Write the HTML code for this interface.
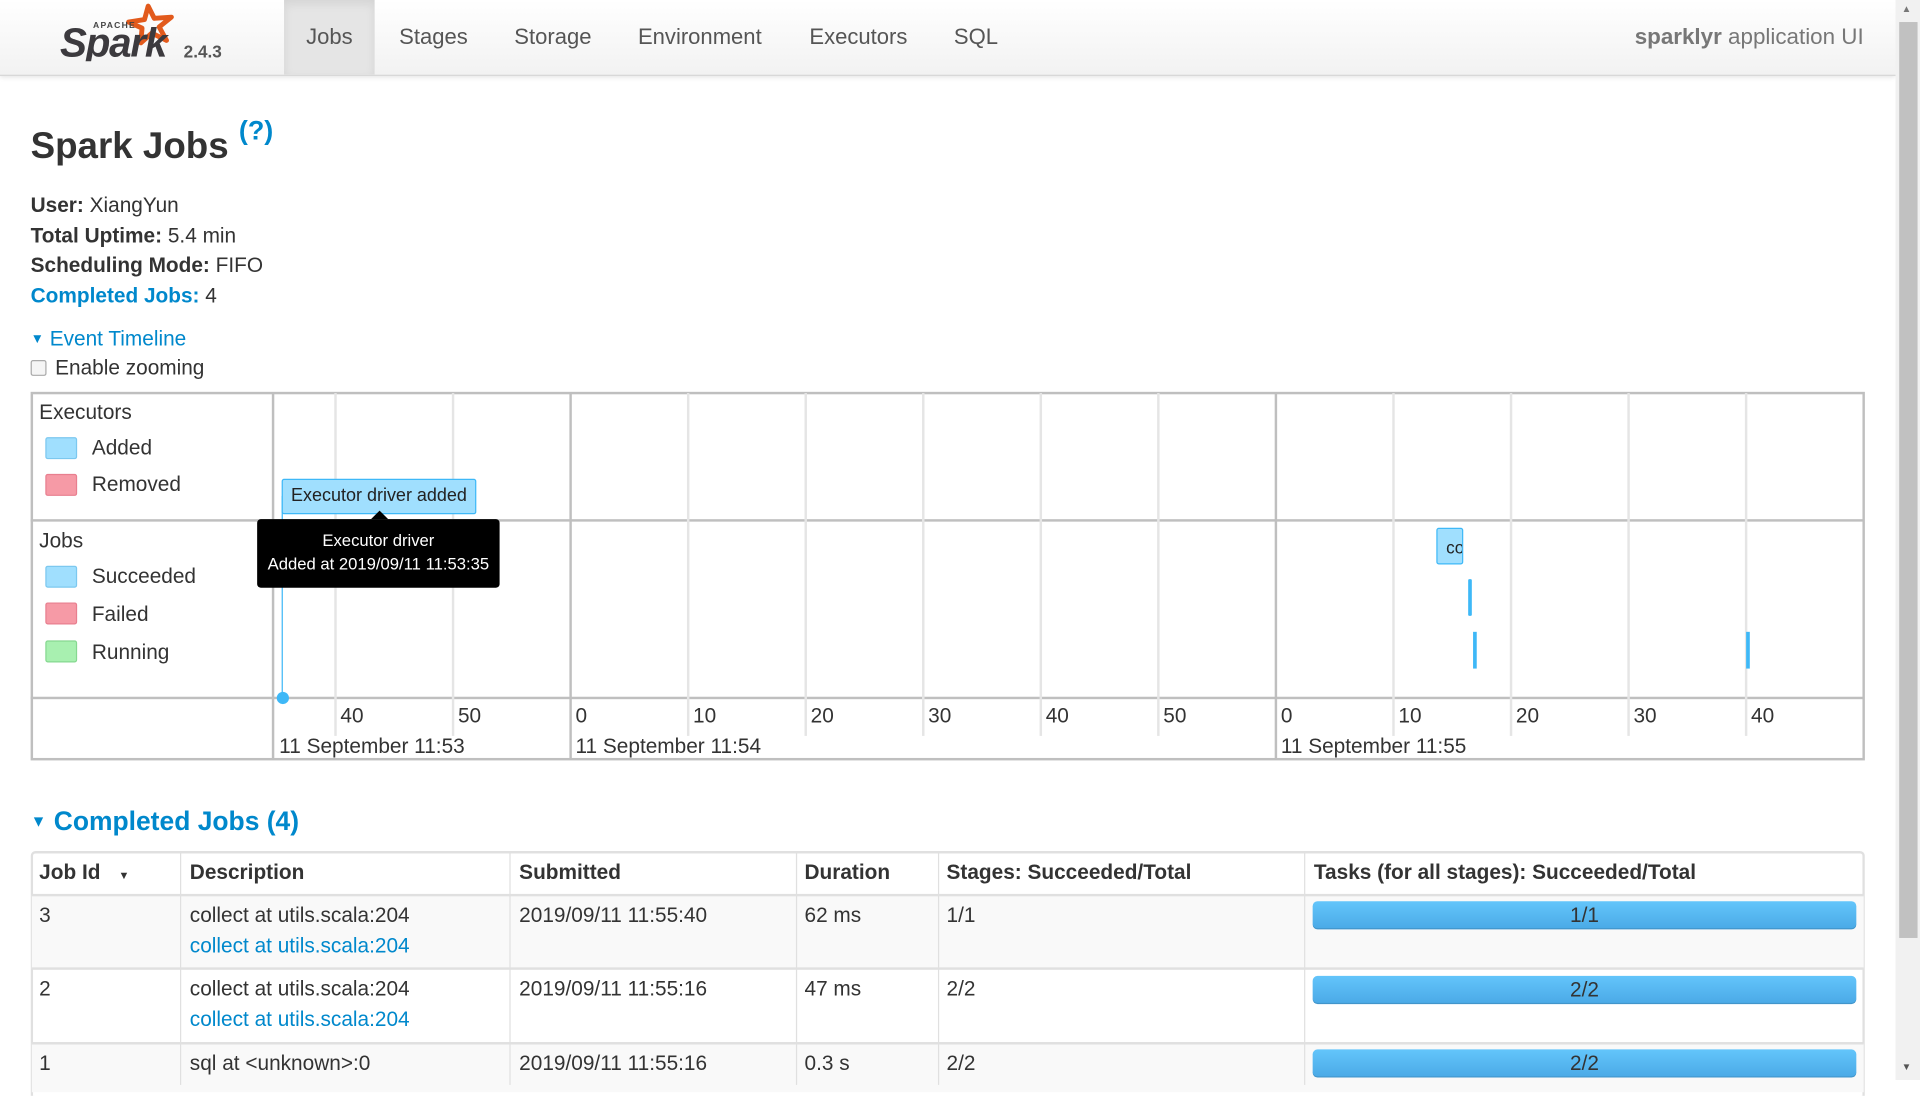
<!DOCTYPE html>
<html><head><meta charset="utf-8"><style>
*{box-sizing:border-box;margin:0;padding:0}
html,body{width:1920px;height:1080px;overflow:hidden;background:#fff}
#w{position:absolute;left:0;top:0;width:1568px;height:882px;transform:scale(1.22449);transform-origin:0 0;font-family:"Liberation Sans",Arial,sans-serif;color:#333;font-size:17px}
.a{position:absolute;white-space:nowrap}
.nav{position:absolute;left:0;top:0;width:1548px;height:62px;background:linear-gradient(#fff,#f2f2f2);border-bottom:1px solid #d4d4d4;box-shadow:0 1px 4px rgba(0,0,0,.12)}
.tab{position:absolute;top:0;height:61px;line-height:60px;font-size:18px;color:#555}
.blue{color:#0088cc}
.vl{position:absolute;width:2px;background:#e5e5e5}
.hl{position:absolute;height:2px;background:#bfbfbf}
.sw{position:absolute;width:26px;height:18px;border-radius:2px}
.bar{position:absolute;left:1072px;width:444px;height:23px;border-radius:4px;background:linear-gradient(#63c5fb,#4aa9e6);text-align:center;line-height:23px;color:#333;font-size:17px;box-shadow:inset 0 -1px 0 rgba(0,0,0,.12)}
</style></head><body><div id="w">
<div class="nav">
 <svg class="a" style="left:48px;top:2px" width="100" height="48" viewBox="0 0 100 48">
  <path d="M73 3 L78 13 L92 12 L82 20 L88 31 L76 25 L67 33 L68 21 L57 16 L70 14 Z" fill="none" stroke="#e25a1c" stroke-width="4" stroke-linejoin="round"/>
  <text x="28" y="21" font-size="7" font-family="Liberation Sans" font-weight="bold" fill="#444" letter-spacing="1">APACHE</text>
  <text x="1" y="44" font-size="33" font-family="Liberation Sans" font-style="italic" font-weight="bold" fill="#3c3a3e" letter-spacing="-1">Spark</text>
 </svg>
 <div class="a" style="left:150px;top:34px;font-size:14px;font-weight:bold;color:#555">2.4.3</div>
 <div class="tab" style="left:232px;width:74px;background:#e5e5e5;text-align:center;box-shadow:inset 0 3px 8px rgba(0,0,0,.08)">Jobs</div>
 <div class="tab" style="left:326px">Stages</div>
 <div class="tab" style="left:420px">Storage</div>
 <div class="tab" style="left:521px">Environment</div>
 <div class="tab" style="left:661px">Executors</div>
 <div class="tab" style="left:779px">SQL</div>
 <div class="tab" style="left:1335px;color:#777;font-size:18.3px"><b>sparklyr</b> application UI</div>
</div>
<div class="a" style="left:1548px;top:0;width:20px;height:882px;background:#f1f1f1"></div>
<div class="a" style="left:1551px;top:18px;width:15px;height:748px;background:#c1c1c1"></div>
<div class="a" style="left:1553px;top:3px;font-size:8px;color:#777">▲</div>
<div class="a" style="left:1553px;top:867px;font-size:8px;color:#555">▼</div>

<div class="a" style="left:25px;top:98px;font-size:30px;font-weight:bold;color:#333">Spark Jobs <sup class="blue" style="font-size:22px;position:relative;top:-4px">(?)</sup></div>
<div class="a" style="left:25px;top:156px;line-height:24.5px"><b>User:</b> XiangYun<br><b>Total Uptime:</b> 5.4 min<br><b>Scheduling Mode:</b> FIFO<br><a class="blue"><b>Completed Jobs:</b></a> 4</div>
<div class="a blue" style="left:25px;top:267px"><span style="font-size:11px;position:relative;top:-2px">▼</span> Event Timeline</div>
<div class="a" style="left:25px;top:294px;width:13px;height:13px;border:1px solid #aaa;border-radius:2px;background:#f5f5f5"></div>
<div class="a" style="left:45px;top:291px">Enable zooming</div>

<div class="a" style="left:25px;top:320px;width:1498px;height:301px;border:2px solid #bfbfbf"></div>
<div class="a" style="left:222px;top:321px;width:2px;height:299px;background:#bfbfbf"></div>
<div class="hl" style="left:25px;top:424px;width:1497px"></div>
<div class="hl" style="left:25px;top:569px;width:1497px"></div>
<div class="vl" style="left:273px;top:321px;height:280px"></div>
<div class="vl" style="left:369px;top:321px;height:280px"></div>
<div class="vl" style="left:465px;top:321px;height:299px;background:#bfbfbf"></div>
<div class="vl" style="left:561px;top:321px;height:280px"></div>
<div class="vl" style="left:657px;top:321px;height:280px"></div>
<div class="vl" style="left:753px;top:321px;height:280px"></div>
<div class="vl" style="left:849px;top:321px;height:280px"></div>
<div class="vl" style="left:945px;top:321px;height:280px"></div>
<div class="vl" style="left:1041px;top:321px;height:299px;background:#bfbfbf"></div>
<div class="vl" style="left:1137px;top:321px;height:280px"></div>
<div class="vl" style="left:1233px;top:321px;height:280px"></div>
<div class="vl" style="left:1329px;top:321px;height:280px"></div>
<div class="vl" style="left:1425px;top:321px;height:280px"></div>

<div class="a" style="left:32px;top:327px">Executors</div>
<div class="sw" style="left:37px;top:357px;background:#a0dffe;border:1px solid #7cc8ef"></div><div class="a" style="left:75px;top:356px">Added</div>
<div class="sw" style="left:37px;top:387px;background:#f69aa6;border:1px solid #e87f8f"></div><div class="a" style="left:75px;top:386px">Removed</div>
<div class="a" style="left:32px;top:432px">Jobs</div>
<div class="sw" style="left:37px;top:462px;background:#a0dffe;border:1px solid #7cc8ef"></div><div class="a" style="left:75px;top:461px">Succeeded</div>
<div class="sw" style="left:37px;top:492px;background:#f69aa6;border:1px solid #e87f8f"></div><div class="a" style="left:75px;top:492px">Failed</div>
<div class="sw" style="left:37px;top:523px;background:#a8f0b0;border:1px solid #86d890"></div><div class="a" style="left:75px;top:523px">Running</div>

<div class="a" style="left:230px;top:405px;width:1px;height:165px;background:#3eb8f7"></div>
<div class="a" style="left:226px;top:565px;width:10px;height:10px;border-radius:5px;background:#3eb8f7"></div>
<div class="a" style="left:230px;top:391px;width:159px;height:29px;background:#a0dffe;border:1px solid #3eb8f7;border-radius:2px;font-size:14.7px;line-height:27px;text-align:center;color:#222">Executor driver added</div>
<div class="a" style="left:303px;top:417px;width:0;height:0;border:7px solid transparent;border-bottom-color:#000;border-top:0"></div>
<div class="a" style="left:210px;top:424px;width:198px;height:56px;background:#000;border-radius:3px;color:#fff;font-size:13.6px;line-height:19px;text-align:center;padding-top:8px">Executor driver<br>Added at 2019/09/11 11:53:35</div>

<div class="a" style="left:1173px;top:431px;width:22px;height:30px;background:#a0dffe;border:1px solid #3eb8f7;border-radius:2px;font-size:14px;line-height:30px;overflow:hidden;padding-left:7px;color:#222">co</div>
<div class="a" style="left:1199px;top:473px;width:3px;height:30px;background:#3eb8f7;border-radius:1px"></div>
<div class="a" style="left:1203px;top:516px;width:3px;height:30px;background:#3eb8f7"></div>
<div class="a" style="left:1426px;top:516px;width:3px;height:30px;background:#3eb8f7"></div>

<div class="a" style="left:278px;top:575px">40</div><div class="a" style="left:374px;top:575px">50</div>
<div class="a" style="left:470px;top:575px">0</div><div class="a" style="left:566px;top:575px">10</div><div class="a" style="left:662px;top:575px">20</div><div class="a" style="left:758px;top:575px">30</div><div class="a" style="left:854px;top:575px">40</div><div class="a" style="left:950px;top:575px">50</div>
<div class="a" style="left:1046px;top:575px">0</div><div class="a" style="left:1142px;top:575px">10</div><div class="a" style="left:1238px;top:575px">20</div><div class="a" style="left:1334px;top:575px">30</div><div class="a" style="left:1430px;top:575px">40</div>
<div class="a" style="left:228px;top:600px">11 September 11:53</div>
<div class="a" style="left:470px;top:600px">11 September 11:54</div>
<div class="a" style="left:1046px;top:600px">11 September 11:55</div>

<div class="a blue" style="left:25px;top:658px;font-size:21.6px;font-weight:bold"><span style="font-size:13px;position:relative;top:-3px">▼</span> Completed Jobs (4)</div>

<div class="a" style="left:25px;top:695px;width:1498px;height:200px;border:2px solid #e0e0e0;border-bottom:0;border-radius:4px 4px 0 0"></div>
<div class="a" style="left:26px;top:731px;width:1496px;height:60px;background:#f9f9f9"></div>
<div class="a" style="left:26px;top:852px;width:1496px;height:40px;background:#f9f9f9"></div>
<div class="a" style="left:26px;top:730px;width:1496px;height:2px;background:#e0e0e0"></div>
<div class="a" style="left:26px;top:790px;width:1496px;height:2px;background:#e0e0e0"></div>
<div class="a" style="left:26px;top:851px;width:1496px;height:2px;background:#e0e0e0"></div>
<div class="a" style="left:147px;top:696px;width:1px;height:190px;background:#e0e0e0"></div>
<div class="a" style="left:416px;top:696px;width:1px;height:190px;background:#e0e0e0"></div>
<div class="a" style="left:650px;top:696px;width:1px;height:190px;background:#e0e0e0"></div>
<div class="a" style="left:766px;top:696px;width:1px;height:190px;background:#e0e0e0"></div>
<div class="a" style="left:1065px;top:696px;width:1px;height:190px;background:#e0e0e0"></div>

<div class="a" style="left:32px;top:703px;font-weight:bold">Job Id <span style="font-size:9px;margin-left:10px">▼</span></div>
<div class="a" style="left:155px;top:703px;font-weight:bold">Description</div>
<div class="a" style="left:424px;top:703px;font-weight:bold">Submitted</div>
<div class="a" style="left:657px;top:703px;font-weight:bold">Duration</div>
<div class="a" style="left:773px;top:703px;font-weight:bold">Stages: Succeeded/Total</div>
<div class="a" style="left:1073px;top:703px;font-weight:bold">Tasks (for all stages): Succeeded/Total</div>

<div class="a" style="left:32px;top:738px">3</div>
<div class="a" style="left:155px;top:736px;line-height:24.5px">collect at utils.scala:204<br><span class="blue">collect at utils.scala:204</span></div>
<div class="a" style="left:424px;top:738px">2019/09/11 11:55:40</div>
<div class="a" style="left:657px;top:738px">62 ms</div>
<div class="a" style="left:773px;top:738px">1/1</div>
<div class="bar" style="top:736px">1/1</div>

<div class="a" style="left:32px;top:798px">2</div>
<div class="a" style="left:155px;top:796px;line-height:24.5px">collect at utils.scala:204<br><span class="blue">collect at utils.scala:204</span></div>
<div class="a" style="left:424px;top:798px">2019/09/11 11:55:16</div>
<div class="a" style="left:657px;top:798px">47 ms</div>
<div class="a" style="left:773px;top:798px">2/2</div>
<div class="bar" style="top:797px">2/2</div>

<div class="a" style="left:32px;top:859px">1</div>
<div class="a" style="left:155px;top:859px">sql at &lt;unknown&gt;:0</div>
<div class="a" style="left:424px;top:859px">2019/09/11 11:55:16</div>
<div class="a" style="left:657px;top:859px">0.3 s</div>
<div class="a" style="left:773px;top:859px">2/2</div>
<div class="bar" style="top:857px">2/2</div>
</div></body></html>
